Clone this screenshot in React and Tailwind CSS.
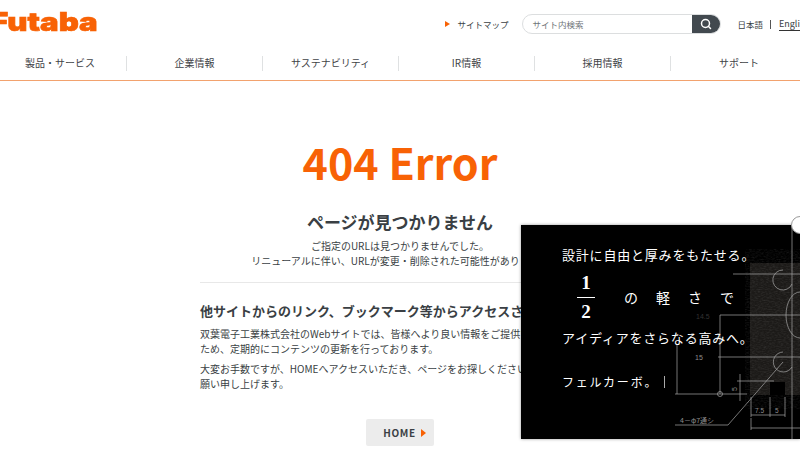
import { Search } from "lucide-react";

const FONT = "font-['Noto_Sans_CJK_JP','Noto_Sans',sans-serif]";
const NAV_ITEMS = ["製品・サービス", "企業情報", "サステナビリティ", "IR情報", "採用情報", "サポート"];

function Header() {
  return (
    <header className="border-b border-[#f2a26e]">
      <div className="flex h-[46px] items-center pt-[2px]">
        <div className="-ml-[10px] mt-[-5px] origin-left scale-x-[1.2] font-['Inter',sans-serif] text-[26px] leading-none font-black text-[#f86205] [-webkit-text-stroke:0.6px_#f86205]">
          Futaba
        </div>
        <div className="ml-auto flex items-center whitespace-nowrap">
          <span className="h-0 w-0 border-y-[3.5px] border-l-[5px] border-y-transparent border-l-[#f86205]" />
          <span className="ml-[7px] text-[8.5px] text-[#3a3f44]">サイトマップ</span>
          <div className="ml-[14px] flex h-[20px] w-[199px] overflow-hidden rounded-full border border-[#dcdedf]">
            <span className="flex-1 pl-[9px] text-[8.5px] leading-[18px] text-[#6f7478]">サイト内検索</span>
            <span className="flex w-[28px] items-center justify-center bg-[#42494f]">
              <Search size={12} strokeWidth={3} color="#fff" />
            </span>
          </div>
          <span className="ml-[16px] text-[8.5px] text-[#3a3f44]">日本語</span>
          <span className="ml-[7px] h-[9px] w-px bg-[#555]" />
          <span className="mr-[-20px] ml-[8px] w-[41px] border-b border-[#333] text-[9px] leading-[13px] text-[#3a3f44]">English</span>
        </div>
      </div>
      <nav className="-ml-[9px] grid h-[34px] w-[816px] grid-cols-6 items-center">
        {NAV_ITEMS.map((label, i) => (
          <div
            key={label}
            className={`flex h-[15px] items-center justify-center pb-[2px] text-[10px] text-[#3f4347] ${i < 5 ? "border-r border-[#dfe1e2]" : ""} ${i === 0 ? "pl-[3px]" : ""}`}
          >
            {label}
          </div>
        ))}
      </nav>
    </header>
  );
}

function Main() {
  return (
    <main className="mx-auto w-[400px] text-[#3a3f44]">
      <h1 className="mt-[52px] text-center text-[43px] leading-[56px] font-bold text-[#f86205]">404 Error</h1>
      <h2 className="mt-[20px] text-center text-[17px] leading-[26px] font-bold">ページが見つかりません</h2>
      <p className="mt-[3px] text-center text-[10px] leading-[15px]">ご指定のURLは見つかりませんでした。</p>
      <p className="text-center text-[10px] leading-[15px]">リニューアルに伴い、URLが変更・削除された可能性があります。</p>
      <div className="mt-[14px] h-px bg-[#e8e8e8]" />
      <h3 className="mt-[18px] text-[13px] leading-[20px] font-bold whitespace-nowrap">他サイトからのリンク、ブックマーク等からアクセスされた方へ</h3>
      <p className="mt-[6px] text-[10px] leading-[14.5px]">
        双葉電子工業株式会社のWebサイトでは、皆様へより良い情報をご提供する
        <br />
        ため、定期的にコンテンツの更新を行っております。
      </p>
      <p className="mt-[6px] text-[10px] leading-[14.5px]">
        大変お手数ですが、HOMEへアクセスいただき、ページをお探しくださいますようお
        <br />
        願い申し上げます。
      </p>
      <div className="mt-[28px] flex justify-center">
        <div className="flex h-[27px] w-[68px] items-center justify-center gap-[5px] rounded-[2px] bg-[#ececec] pl-[9px] text-[10px] font-bold tracking-[0.6px]">
          HOME
          <span className="h-0 w-0 border-y-[4px] border-l-[5px] border-y-transparent border-l-[#f86205]" />
        </div>
      </div>
    </main>
  );
}

function Blueprint() {
  return (
    <svg className="absolute inset-0" width="279" height="214" viewBox="0 0 279 214">
      <defs>
        <filter id="grain">
          <feTurbulence type="fractalNoise" baseFrequency="0.35 0.9" numOctaves="2" />
          <feColorMatrix values="0 0 0 0 1 0 0 0 0 1 0 0 0 0 1 0.9 0 0 0 -0.34" />
        </filter>
      </defs>
      <rect x="229" y="38" width="50" height="132" fill="#1c1a18" />
      <rect x="229" y="38" width="50" height="132" filter="url(#grain)" opacity="0.18" />
      <rect x="249" y="157" width="15" height="13" fill="#000" />
      <g stroke="#a8a8a8" strokeWidth="0.7" fill="none">
        <path d="M271 0V214M212 49H279M199 90H279M197 132H279" />
        <path d="M199 90V169M156 120V169M154 169H226" />
        <path d="M262 45a10 10 0 1 0 9 14M262 127a10 10 0 1 0 9 15" />
        <path d="M279 67a14 23 0 0 0 0 46" />
        <circle cx="199" cy="169" r="2.5" />
        <path d="M262 137L207 200H154" />
        <path d="M219 149V176M216 156H253" />
        <path d="M230 172V192M249 172V192M264 172V192M230 190H264" />
        <path d="M230 193V205M230 203H279" />
      </g>
      <g fill="#8d8d8d" fontSize="7" fontFamily="Liberation Sans, sans-serif">
        <text x="175" y="94" fill="#333">14.5</text>
        <text x="174" y="135">15</text>
        <text x="234" y="188" fontSize="6.5">7.5</text>
        <text x="254" y="188" fontSize="6.5">5</text>
        <text x="159" y="198" fontFamily="Noto Sans CJK JP, sans-serif">4－φ7通シ</text>
        <text x="0" y="0" transform="translate(216 166) rotate(-90)">5</text>
      </g>
    </svg>
  );
}

function VideoPopup() {
  return (
    <div className="absolute top-[225px] left-[521px] h-[214px] w-[279px] bg-black text-white shadow-[0_0_3px_rgba(0,0,0,0.4)]">
      <div className="absolute inset-0 overflow-hidden">
        <Blueprint />
      </div>
      <span className="absolute -top-[9px] -right-[9px] h-[18px] w-[18px] rounded-full border border-[#999] bg-white" />
      <div className="relative flex h-full flex-col pt-[20px] pl-[41px] font-['Noto_Sans_CJK_JP',serif] whitespace-nowrap">
        <p className="text-[13px] leading-[20px] tracking-[0.8px]">設計に自由と厚みをもたせる。</p>
        <div className="mt-[4px] flex items-center">
          <div className="ml-[15px] flex w-[18px] flex-col items-center font-['Liberation_Serif',serif] text-[19px] leading-[28px] font-bold">
            <span>1</span>
            <span className="h-px w-full bg-white" />
            <span>2</span>
          </div>
          <span className="ml-[29px] text-[14px] tracking-[18px]">の軽さで</span>
        </div>
        <p className="mt-[2px] text-[13px] leading-[20px] tracking-[0.8px]">アイディアをさらなる高みへ。</p>
        <p className="mt-[24px] flex items-center text-[12px] leading-[20px] tracking-[1.8px]">
          フェルカーボ。
          <span className="ml-[6px] h-[12px] w-px bg-[#aaa]" />
        </p>
      </div>
    </div>
  );
}

export default function App() {
  return (
    <div className={`relative h-[450px] w-[800px] overflow-hidden bg-white ${FONT}`}>
      <Header />
      <Main />
      <VideoPopup />
    </div>
  );
}
